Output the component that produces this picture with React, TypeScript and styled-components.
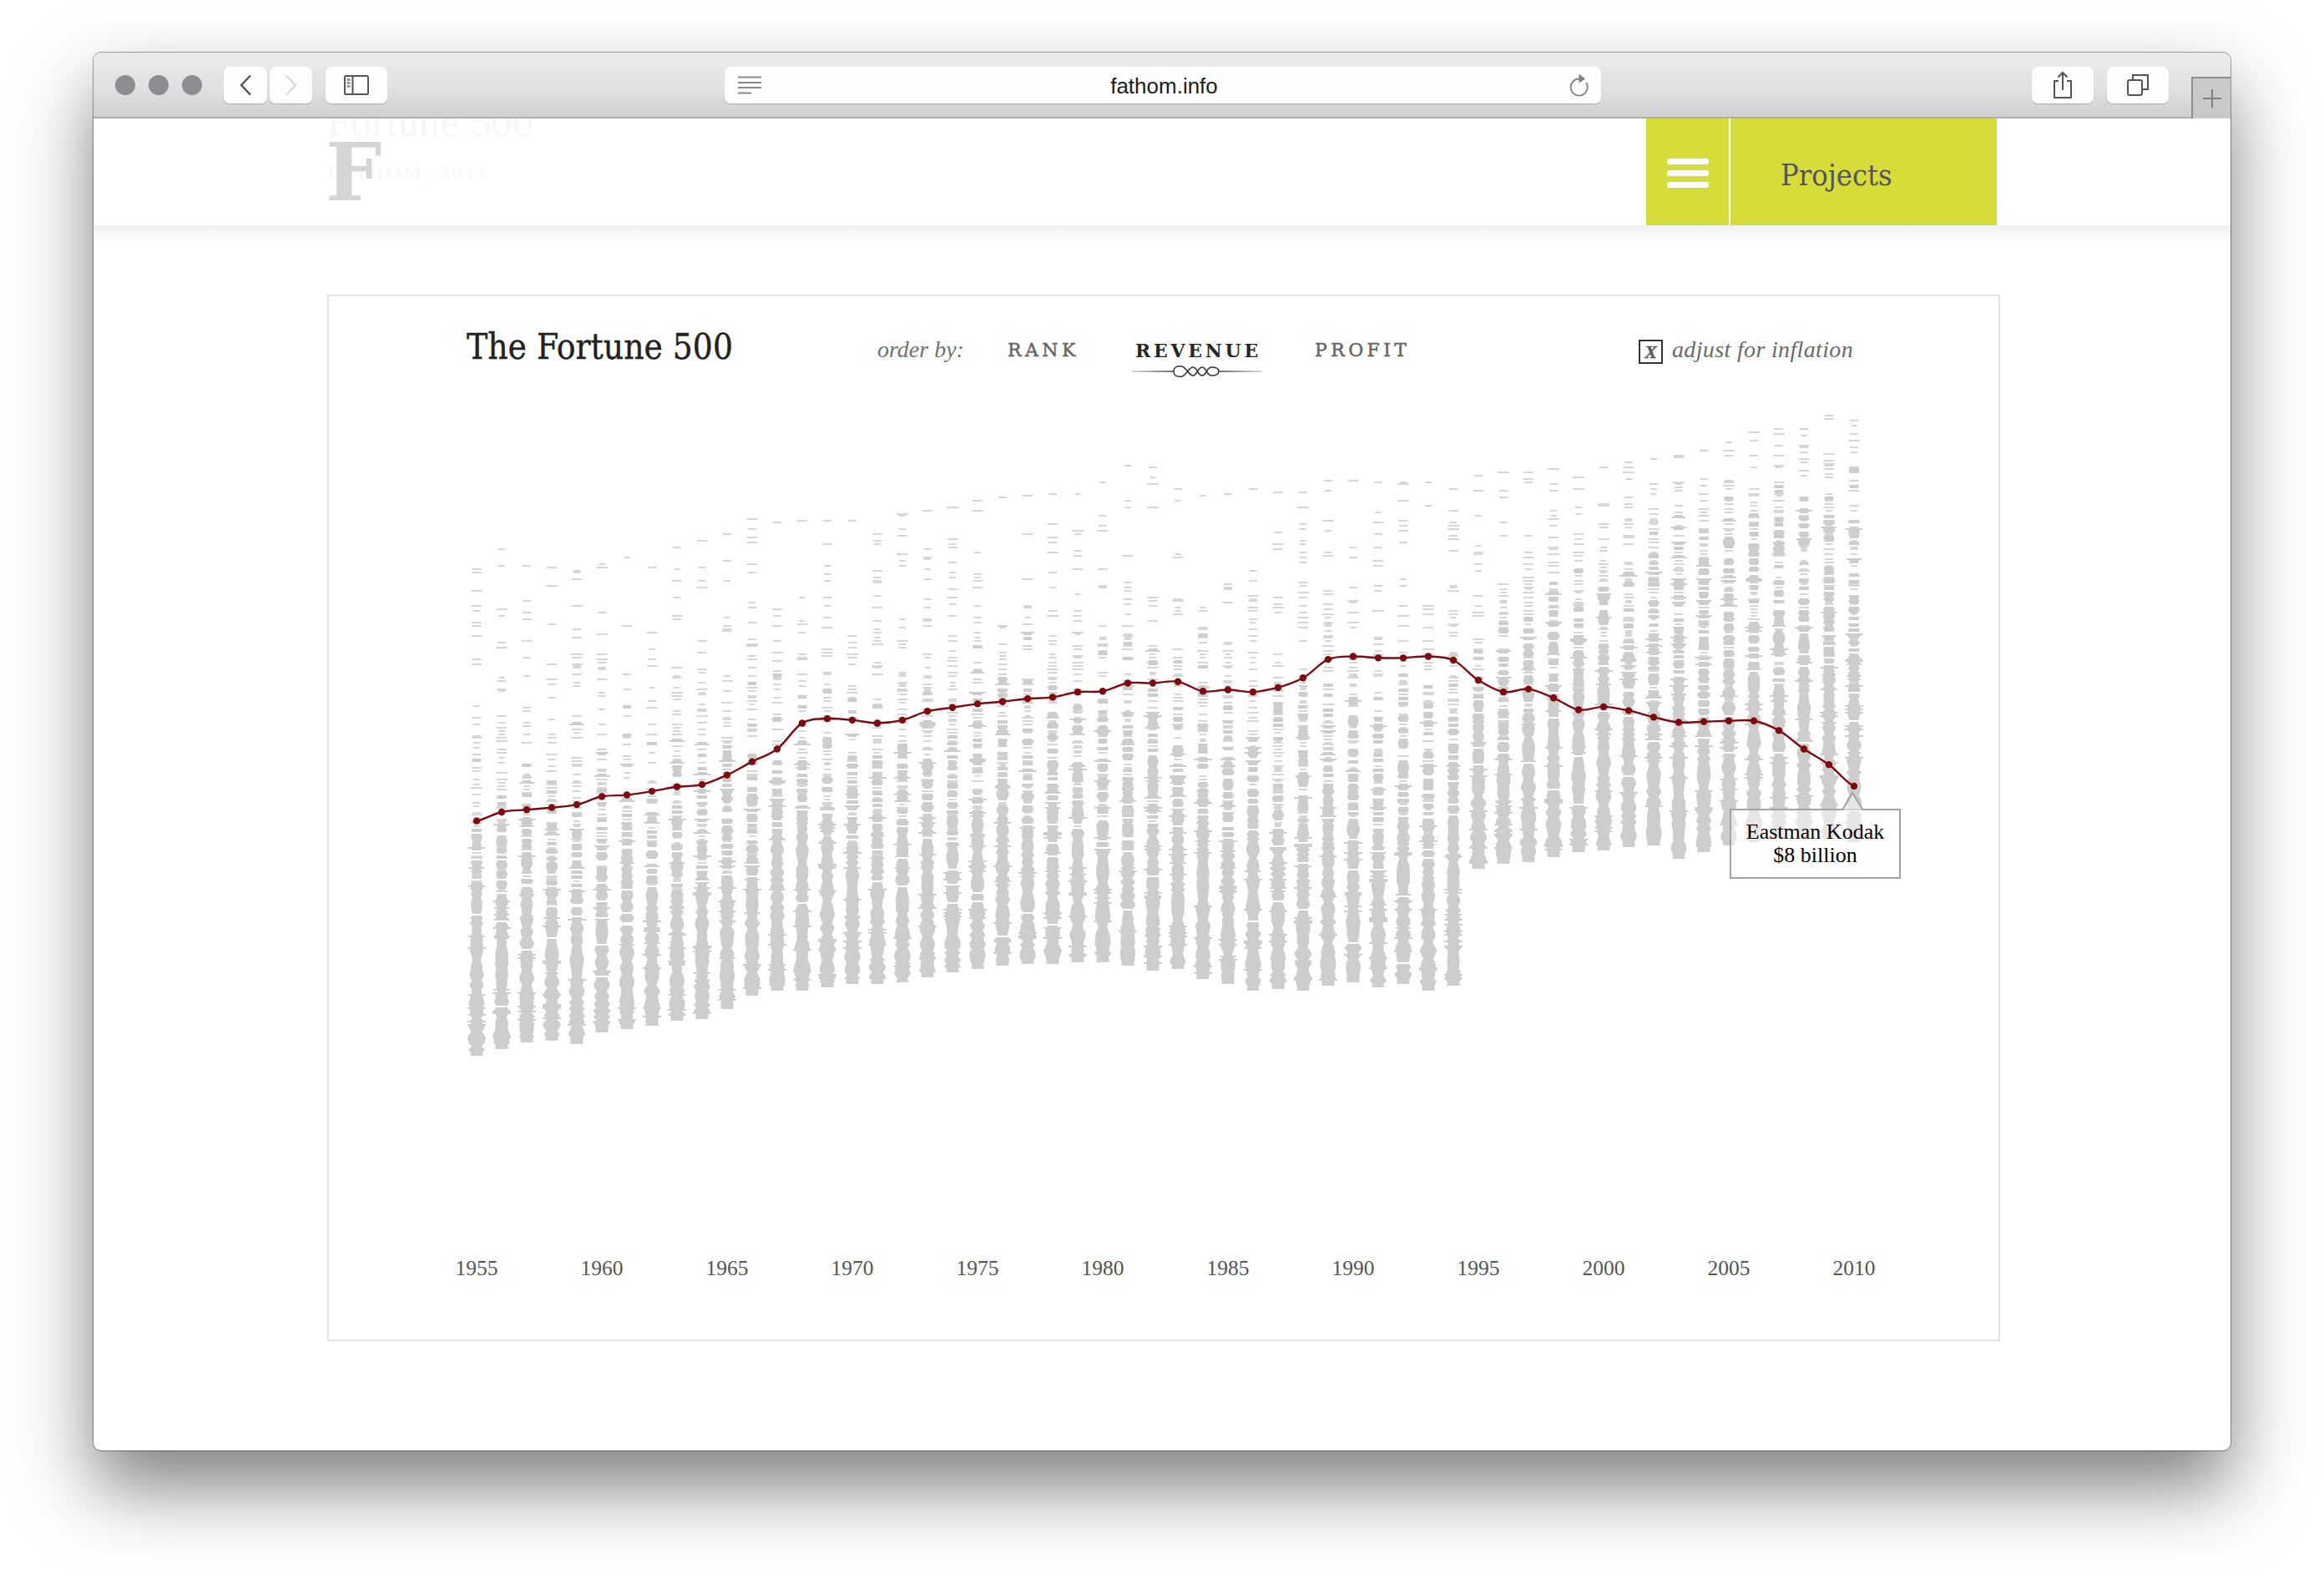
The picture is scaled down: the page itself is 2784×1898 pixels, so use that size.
import React, { useMemo } from "react";
import styled, { createGlobalStyle } from "styled-components";

const Global = createGlobalStyle`
  html, body { margin: 0; padding: 0; background: #fff; }
  body { width: 2784px; height: 1898px; overflow: hidden; font-family: "Liberation Serif", serif; }
`;

const Page = styled.div`
  box-sizing: border-box;
  width: 2784px;
  height: 1898px;
  padding: 63px 112px 0;
`;

const Win = styled.div`
  width: 2560px;
  height: 1675px;
  border-radius: 9px;
  background: #fff;
  overflow: hidden;
  box-shadow: 0 44px 88px rgba(0, 0, 0, 0.5), 0 0 0 1px rgba(90, 90, 90, 0.55);
`;

const Toolbar = styled.div`
  box-sizing: border-box;
  height: 79px;
  display: flex;
  align-items: flex-start;
  padding: 17px 0 0 26px;
  background: linear-gradient(#ececee, #e2e1e4 50%, #d1d0d3);
  border-bottom: 2px solid #aeadb0;
`;

const Lights = styled.div`
  display: flex;
  gap: 16px;
  margin: 10px 26px 0 0;
`;

const Light = styled.span`
  width: 24px;
  height: 24px;
  border-radius: 50%;
  background: #8c8c91;
`;

const ToolButton = styled.div<{ $w: number; $ml?: number }>`
  width: ${(p) => p.$w}px;
  height: 44px;
  margin-left: ${(p) => p.$ml ?? 0}px;
  flex: none;
  display: flex;
  align-items: center;
  justify-content: center;
  background: #fdfdfd;
  border-radius: 7px;
  box-shadow: 0 1px 1px rgba(0, 0, 0, 0.2);
`;

const UrlBar = styled.div`
  position: relative;
  width: 1050px;
  height: 44px;
  margin-left: 404px;
  flex: none;
  display: flex;
  align-items: center;
  justify-content: center;
  background: #fdfdfd;
  border-radius: 7px;
  box-shadow: 0 1px 1px rgba(0, 0, 0, 0.2);
  font: 26px "Liberation Sans", Arial, sans-serif;
  color: #1c1c1c;
  padding: 2px 0 0 3px;
  box-sizing: border-box;
`;

const UrlLeft = styled.svg`
  position: absolute;
  left: 15px;
  top: 11px;
`;

const UrlRight = styled.svg`
  position: absolute;
  right: 14px;
  top: 7px;
`;

const PlusTab = styled.div`
  box-sizing: border-box;
  width: 47px;
  height: 50px;
  margin: 12px 0 0 27px;
  flex: none;
  display: flex;
  align-items: center;
  justify-content: center;
  background: #c9c8ca;
  border-top: 2px solid #8e8e90;
  border-left: 2px solid #8e8e90;
`;

const SiteHeader = styled.header`
  position: relative;
  height: 128px;
  display: flex;
  justify-content: space-between;
  padding: 0 280px;
  background: #fff;
  overflow: hidden;
`;

const HeaderFade = styled.div`
  height: 22px;
  margin-bottom: -22px;
  background: linear-gradient(#f1f1f1, #ffffff);
`;

const Brand = styled.div`
  position: relative;
  margin-top: -25px;
`;

const GhostTitle = styled.div`
  font: 50px/58px "Liberation Serif", serif;
  color: #f7f7f7;
  letter-spacing: 0.4px;
`;

const GhostSub = styled.div`
  margin-top: 16px;
  font: 24px/30px "Liberation Serif", serif;
  color: #f6f6f6;
  letter-spacing: 3.2px;
`;

const BrandF = styled.div`
  position: absolute;
  left: -2px;
  top: 42px;
  font: bold 95px/95px "DejaVu Serif", serif;
  color: #d5d5d5;
`;

const Nav = styled.nav`
  display: flex;
  width: 420px;
  height: 128px;
  flex: none;
  background: #d6dc3a;
`;

const Burger = styled.div`
  width: 101px;
  flex: none;
  display: flex;
  flex-direction: column;
  gap: 7px;
  padding: 48px 0 0 25px;
  box-sizing: border-box;
  border-right: 2px solid #fff;
`;

const BurgerBar = styled.span`
  width: 50px;
  height: 7px;
  border-radius: 3px;
  background: #fff;
`;

const NavLabel = styled.div`
  padding: 47px 0 0 60px;
  font: 36px/42px "DejaVu Serif", serif;
  font-stretch: condensed;
  color: #54545c;
`;

const Main = styled.main`
  padding: 83px 276px 0 280px;
`;

const Card = styled.section`
  box-sizing: border-box;
  width: 2004px;
  height: 1254px;
  border: 2px solid #e4e4e4;
  display: flex;
  flex-direction: column;
`;

const CardHead = styled.div`
  height: 115px;
  flex: none;
  display: flex;
  align-items: flex-start;
  padding-left: 165px;
`;

const Title = styled.h1`
  width: 492px;
  margin: 37px 0 0;
  flex: none;
  font: 400 42px/48px "DejaVu Serif", serif;
  font-stretch: condensed;
  color: #222;
  -webkit-text-stroke: 0.4px #222;
`;

const OrderBy = styled.span`
  width: 156px;
  flex: none;
  margin-top: 48px;
  font: italic 28px/32px "Liberation Serif", serif;
  color: #707070;
`;

const Tab = styled.div<{ $w: number; $on?: boolean }>`
  position: relative;
  width: ${(p) => p.$w}px;
  flex: none;
  margin-top: 50px;
  font: ${(p) => (p.$on ? 700 : 400)} 22px/30px "DejaVu Serif", serif;
  letter-spacing: ${(p) => (p.$on ? 3.7 : 4.4)}px;
  color: ${(p) => (p.$on ? "#262626" : "#666")};
  -webkit-text-stroke: ${(p) => (p.$on ? 0 : 0.5)}px #666;
`;

const Ornament = styled.svg`
  position: absolute;
  left: -4px;
  top: 30px;
`;

const Adjust = styled.div`
  display: flex;
  align-items: flex-start;
  gap: 11px;
  margin: 52px 0 0 268px;
`;

const Check = styled.span`
  box-sizing: border-box;
  width: 29px;
  height: 29px;
  flex: none;
  display: flex;
  align-items: center;
  justify-content: center;
  border: 2px solid #333;
  font: italic 700 22px/25px "Liberation Serif", serif;
  color: #5a5a5a;
  -webkit-text-stroke: 0.4px #5a5a5a;
`;

const AdjustLabel = styled.span`
  margin-top: -3px;
  font: italic 28px/30px "Liberation Serif", serif;
  color: #6a6a6a;
  letter-spacing: 0.35px;
`;

const ChartWrap = styled.div`
  position: relative;
  height: 1020px;
  flex: none;
`;

const ChartSvg = styled.svg`
  display: block;
`;

const Tip = styled.div`
  position: absolute;
  left: 1678px;
  top: 499px;
  box-sizing: border-box;
  width: 205px;
  height: 84px;
  padding-top: 12px;
  border: 2px solid #a2a2a2;
  background: rgba(255, 255, 255, 0.5);
  text-align: center;
  font: 26px/28px "Liberation Serif", serif;
  color: #000;
`;

const TipArrow = styled.svg`
  position: absolute;
  left: 132px;
  top: -23px;
`;

const Years = styled.div`
  display: grid;
  grid-template-columns: repeat(12, 150px);
  padding-left: 102px;
  margin-top: 15px;
`;

const Year = styled.span`
  text-align: center;
  font: 25.5px/30px "Liberation Serif", serif;
  color: #555;
`;

const SPINE_X0 = 571 - 394;
const TOP_OFFSET = 470;
const SCALE = 2784 / 1568;
const toY = (v: number) => v * SCALE - TOP_OFFSET;

const line = [
  554, 548, 546.5, 545, 543, 537.5, 536.5, 534, 531, 529.5, 523, 514, 505.5, 488, 485, 486, 488, 486, 480,
  477.5, 475, 473.5, 471.5, 470.5, 467, 466.5, 461, 461, 460, 466.5, 465.5, 467, 464, 457.5, 445, 443, 444,
  444, 443, 445.5, 459, 467, 465, 471, 479, 477, 479.5, 484, 487.5, 487, 486.5, 486.5, 493, 505.5, 516, 530.5,
];
const tops = [
  384, 371, 382, 383, 385, 381, 376, 383, 370, 365, 361, 350, 353, 352, 352, 351, 361, 347, 345, 342, 338, 336,
  335, 333, 333, 325, 314, 315, 330, 334, 333, 330, 332, 332, 324, 324, 325, 326, 325, 330, 321, 319, 319, 317,
  322, 315, 312, 310, 307, 304, 299, 292, 290, 289, 280, 284,
];
const bottoms = [
  713, 708, 703, 702, 705, 697, 695, 692, 689, 688, 681, 672, 669, 668, 666, 664, 664, 663, 659, 656, 654, 652,
  650, 650, 649, 649, 652, 655, 654, 661, 664, 668, 667, 668, 665, 663, 666, 664, 669, 665, 586, 583, 582, 578,
  575, 574, 572, 571, 579, 575, 570, 568, 566, 566, 566, 568,
];

function rng(seed: number) {
  let s = seed >>> 0;
  return () => {
    s = (s + 0x6d2b79f5) >>> 0;
    let t = s;
    t = Math.imul(t ^ (t >>> 15), t | 1);
    t ^= t + Math.imul(t ^ (t >>> 7), t | 61);
    return ((t ^ (t >>> 14)) >>> 0) / 4294967296;
  };
}

// Position (0..1 down the column) where the 30th-ranked company sits.
function kneeOf(c: number): number {
  if (c < 40) return 0.55 - 0.05 * (c / 39);
  if (c <= 45) return 0.56 - 0.21 * ((c - 40) / 5);
  return 0.35 - 0.07 * ((c - 45) / 10);
}

function buildColumns(): { dense: string; sparse: string } {
  let dense = "";
  let sparse = "";
  const L = Math.log(500);
  const U = Math.log(30) / L;
  for (let c = 0; c < 56; c++) {
    const r = rng(c * 97 + 11);
    const x = SPINE_X0 + c * 30;
    const top = toY(tops[c]);
    const bottom = toY(bottoms[c]);
    const span = bottom - top;
    const d = kneeOf(c);
    const rhoAt = (t: number) => {
      if (t < d) {
        const u = (t / d) * U;
        return (Math.exp(L * u) * L * U) / (d * span);
      }
      const u = U + ((t - d) / (1 - d)) * (1 - U);
      return (Math.exp(L * u) * L * (1 - U)) / ((1 - d) * span);
    };
    const ph1 = r() * 6.28;
    const ph2 = r() * 6.28;
    const f1 = 0.14 + r() * 0.06;
    const f2 = 0.34 + r() * 0.12;
    const exp = () => -Math.log(1 - r() * 0.999);
    let y = Math.round(top / 2) * 2;
    while (y <= bottom) {
      const t = Math.max(0, (y - top) / span);
      const rho = rhoAt(t);
      const n = 1 + Math.floor(exp() * Math.min(rho * 4, 7)) + (rho > 1 ? 2 : 0);
      const base = 10 + 9 * Math.pow(Math.min(rho, 5.3) / 5.3, 0.5);
      for (let i = 0; i < n && y <= bottom; i++, y += 2) {
        let w: number;
        if (n === 1) {
          w = 7 + r() * 7;
        } else {
          const shape = 0.72 + 0.36 * Math.sin((Math.PI * (i + 0.5)) / n);
          const lump = 0.5 * Math.sin(y * f1 + ph1) + 0.5 * Math.sin(y * f2 + ph2);
          w = base * shape * (1 + 0.1 * lump) + (r() < 0.09 ? 5 + r() * 4 : 0) + (r() - 0.5) * 1.5;
          w = Math.min(22, Math.max(6, w));
        }
        if (bottom - y < 6) w = Math.min(w, 15);
        const seg = `M${(x - w / 2).toFixed(1)} ${y}h${w.toFixed(1)}`;
        if (n === 1) sparse += seg;
        else dense += seg;
      }
      const gapPx = (exp() * 0.75) / Math.pow(Math.max(rho, 0.01), 0.85);
      y += Math.round(gapPx / 2) * 2;
    }
  }
  return { dense, sparse };
}

function buildLine(pts: [number, number][]): string {
  let d = `M${pts[0][0]} ${pts[0][1]}`;
  for (let i = 0; i < pts.length - 1; i++) {
    const p0 = pts[Math.max(0, i - 1)];
    const p1 = pts[i];
    const p2 = pts[i + 1];
    const p3 = pts[Math.min(pts.length - 1, i + 2)];
    const t = 0.16;
    const c1y = p1[1] + (p2[1] - p0[1]) * t;
    const c2y = p2[1] - (p3[1] - p1[1]) * t;
    d += `C${p1[0] + 10} ${c1y.toFixed(1)} ${p2[0] - 10} ${c2y.toFixed(1)} ${p2[0]} ${p2[1].toFixed(1)}`;
  }
  return d;
}

const yearLabels = [1955, 1960, 1965, 1970, 1975, 1980, 1985, 1990, 1995, 2000, 2005, 2010];

export default function App() {
  const cols = useMemo(buildColumns, []);
  const pts = useMemo(() => line.map((v, i) => [SPINE_X0 + i * 30, toY(v)] as [number, number]), []);
  const path = useMemo(() => buildLine(pts), [pts]);
  return (
    <Page>
      <Global />
      <Win>
        <Toolbar>
          <Lights>
            <Light />
            <Light />
            <Light />
          </Lights>
          <ToolButton $w={52}>
            <svg width="16" height="26" viewBox="0 0 16 26">
              <path d="M14 1.5 3 13l11 11.5" fill="none" stroke="#555" strokeWidth="2.4" />
            </svg>
          </ToolButton>
          <ToolButton $w={51} $ml={3}>
            <svg width="16" height="26" viewBox="0 0 16 26">
              <path d="M2 1.5 13 13 2 24.5" fill="none" stroke="#d9d9d9" strokeWidth="2.4" />
            </svg>
          </ToolButton>
          <ToolButton $w={74} $ml={16}>
            <svg width="30" height="24" viewBox="0 0 30 24">
              <rect x="1" y="1" width="28" height="22" rx="1.5" fill="none" stroke="#555" strokeWidth="2" />
              <path d="M10.5 1v22" stroke="#555" strokeWidth="2" />
              <path d="M3.5 5.5h4M3.5 9.5h4M3.5 13.5h4" stroke="#888" strokeWidth="2.4" />
            </svg>
          </ToolButton>
          <UrlBar>
            <UrlLeft width="30" height="22" viewBox="0 0 30 22">
              <path d="M1 1.5h28M1 8h28M1 14h28" stroke="#8a8a8a" strokeWidth="2" />
              <path d="M1 20.5h16" stroke="#8a8a8a" strokeWidth="2" />
            </UrlLeft>
            fathom.info
            <UrlRight width="26" height="30" viewBox="0 0 26 30">
              <path d="M14 7.5a10 10 0 1 0 8 4.5" fill="none" stroke="#808080" strokeWidth="1.8" />
              <path d="M13.5 1.5 21 7.5l-7.5 5z" fill="#808080" />
            </UrlRight>
          </UrlBar>
          <ToolButton $w={74} $ml={516}>
            <svg width="24" height="34" viewBox="0 0 24 34">
              <path d="M7 12H2v20h20V12h-5" fill="none" stroke="#555" strokeWidth="2" strokeLinejoin="round" />
              <path d="M12 23V2M6.5 7.5 12 2l5.5 5.5" fill="none" stroke="#555" strokeWidth="2" />
            </svg>
          </ToolButton>
          <ToolButton $w={74} $ml={16}>
            <svg width="26" height="26" viewBox="0 0 26 26">
              <rect x="1" y="7" width="17" height="18" rx="2" fill="none" stroke="#555" strokeWidth="2" />
              <path d="M7 7V1h18v17h-7" fill="none" stroke="#555" strokeWidth="2" />
            </svg>
          </ToolButton>
          <PlusTab>
            <svg width="22" height="22" viewBox="0 0 22 22">
              <path d="M11 0v22M0 11h22" stroke="#7f7f7f" strokeWidth="2" />
            </svg>
          </PlusTab>
        </Toolbar>
        <SiteHeader>
          <Brand>
            <GhostTitle>Fortune 500</GhostTitle>
            <GhostSub>FATHOM, 2011</GhostSub>
            <BrandF>F</BrandF>
          </Brand>
          <Nav>
            <Burger>
              <BurgerBar />
              <BurgerBar />
              <BurgerBar />
            </Burger>
            <NavLabel>Projects</NavLabel>
          </Nav>
        </SiteHeader>
        <HeaderFade />
        <Main>
          <Card>
            <CardHead>
              <Title>The Fortune 500</Title>
              <OrderBy>order by:</OrderBy>
              <Tab $w={153}>RANK</Tab>
              <Tab $w={215} $on>
                REVENUE
                <Ornament width="156" height="20" viewBox="0 0 156 20">
                  <defs>
                    <linearGradient id="orn" gradientUnits="userSpaceOnUse" x1="0" x2="156" y1="0" y2="0">
                      <stop offset="0" stopColor="#cfcfcf" />
                      <stop offset="0.32" stopColor="#444" />
                      <stop offset="0.68" stopColor="#444" />
                      <stop offset="1" stopColor="#cfcfcf" />
                    </linearGradient>
                  </defs>
                  <path d="M0 10H50M104 10H156" stroke="url(#orn)" strokeWidth="1.4" />
                  <path
                    d="M50 10C50 4 56 3 60 4C65 5 68 15 73 15C78 15 79 5 84 5C89 5 90 15 95 15C100 15 104 14 104 10M50 10C50 16 56 17 60 16C65 15 68 5 73 5C78 5 79 15 84 15C89 15 90 5 95 5C100 5 104 6 104 10"
                    fill="none"
                    stroke="#333"
                    strokeWidth="1.5"
                  />
                </Ornament>
              </Tab>
              <Tab $w={120}>PROFIT</Tab>
              <Adjust>
                <Check>X</Check>
                <AdjustLabel>adjust for inflation</AdjustLabel>
              </Adjust>
            </CardHead>
            <ChartWrap>
              <ChartSvg width="2000" height="1020" viewBox="0 0 2000 1020">
                <path d={cols.sparse} stroke="#c9c9c9" strokeWidth="1.7" fill="none" />
                <path d={cols.dense} stroke="#cdcdcd" strokeWidth="2.2" fill="none" />
                <path d={path} stroke="#7d0a0f" strokeWidth="2.4" fill="none" />
                {pts.map(([x, y]) => (
                  <circle key={x} cx={x} cy={y} r="4.2" fill="#7d0a0f" />
                ))}
              </ChartSvg>
              <Tip>
                <TipArrow width="30" height="24" viewBox="0 0 30 24">
                  <path d="M1 23 13 2l13 21" fill="rgba(255,255,255,0.5)" stroke="#a2a2a2" strokeWidth="2" />
                  <path d="M3 24h22" stroke="#fff" strokeWidth="2" opacity="0.8" />
                </TipArrow>
                Eastman Kodak
                <br />
                $8 billion
              </Tip>
            </ChartWrap>
            <Years>
              {yearLabels.map((y) => (
                <Year key={y}>{y}</Year>
              ))}
            </Years>
          </Card>
        </Main>
      </Win>
    </Page>
  );
}
